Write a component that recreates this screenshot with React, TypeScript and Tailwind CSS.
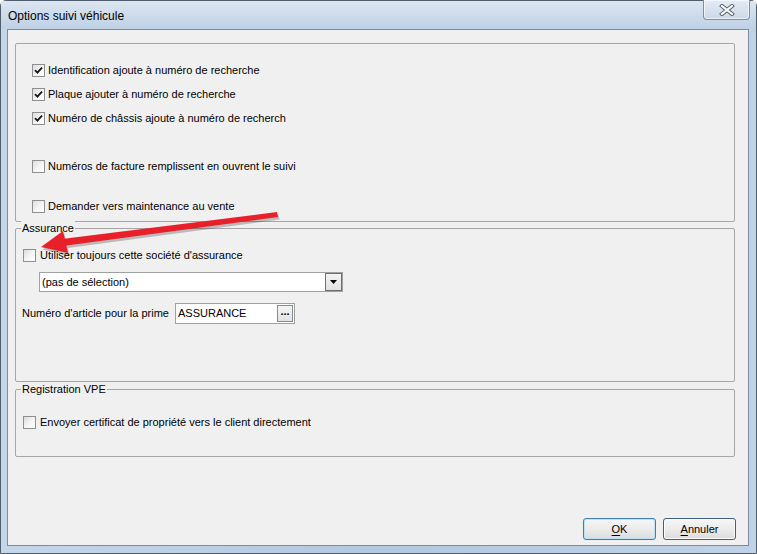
import React from "react";

function CheckBox({ checked }: { checked?: boolean }) {
  return (
    <span className="relative flex h-[13px] w-[13px] shrink-0 items-center justify-center border border-[#8e8f8f] bg-gradient-to-br from-[#dcdcdc] via-[#f4f4f4] to-white">
      {checked && (
        <svg width="9" height="9" viewBox="0 0 9 9" className="block">
          <path d="M1 4.2 L3.4 6.6 L8 1.6" fill="none" stroke="#1a1a1a" strokeWidth="1.9" />
        </svg>
      )}
    </span>
  );
}

function CheckRow({ label, checked, className = "" }: { label: string; checked?: boolean; className?: string }) {
  return (
    <div className={`flex h-[24px] items-center gap-[3px] ${className}`}>
      <CheckBox checked={checked} />
      <span>{label}</span>
    </div>
  );
}

function GroupBox({ label, className = "", children }: { label?: string; className?: string; children?: React.ReactNode }) {
  return (
    <div className={`relative ml-[7px] w-[720px] rounded-[2px] border border-[#a6a6a6] ${className}`}>
      {label && (
        <span className="absolute left-[5px] top-[-8px] bg-[#f0f0f0] px-[1px] leading-[14px]">{label}</span>
      )}
      {children}
    </div>
  );
}

function WinButton({ children, isDefault }: { children: React.ReactNode; isDefault?: boolean }) {
  return (
    <button
      type="button"
      className={`flex h-[22px] w-[73px] items-center justify-center rounded-[3px] border bg-gradient-to-b from-[#f6f6f6] via-[#ececec] to-[#dcdcdc] text-[11px] text-black ${
        isDefault ? "border-[#3c7fb1] shadow-[inset_0_0_0_1px_#bfe1f6]" : "border-[#3f5f7f] shadow-[inset_0_0_0_1px_#fcfcfc]"
      }`}
    >
      {children}
    </button>
  );
}

export default function App() {
  return (
    <div className="relative h-[554px] w-[757px] overflow-hidden bg-white font-['Liberation_Sans',Arial,sans-serif] text-[11px] text-black">
      <div className="flex h-full w-full flex-col rounded-t-[6px] border border-[#4f5d6d] bg-gradient-to-r from-[#c4d6ea] via-[#b3c9e1] to-[#bfd2e7]">
        {/* title bar */}
        <div className="relative flex h-[28px] items-center bg-gradient-to-b from-[#dce6f1] to-[#bfd1e6] pl-[7px] pt-[1px]">
          <span className="text-[12px] text-black">Options suivi véhicule</span>
          <div className="absolute right-[6px] top-[-1px] flex h-[20px] w-[47px] items-center justify-center rounded-b-[4px] border border-t-0 border-[#7f8ea0] bg-gradient-to-b from-[#e5edf5] to-[#c9d8e8] shadow-[inset_0_0_0_1px_rgba(255,255,255,0.6)]">
            <svg width="16" height="12" viewBox="0 0 16 12">
              <path d="M3 2 L13 10 M13 2 L3 10" stroke="#4f5966" strokeWidth="4" strokeLinecap="square" />
              <path d="M3 2 L13 10 M13 2 L3 10" stroke="#ffffff" strokeWidth="2.2" strokeLinecap="square" />
            </svg>
          </div>
        </div>

        {/* client area */}
        <div className="ml-[6px] mr-[7px] flex h-[517px] flex-col border border-[#7c8ca0] bg-[#f0f0f0]">
          <GroupBox className="mt-[13px] h-[179px] pl-[16px] pt-[14px]">
            <CheckRow checked label="Identification ajoute à numéro de recherche" />
            <CheckRow checked label="Plaque ajouter à numéro de recherche" />
            <CheckRow checked label="Numéro de châssis ajoute à numéro de recherch" />
            <CheckRow label="Numéros de facture remplissent en ouvrent le suivi" className="mt-[24px]" />
            <CheckRow label="Demander vers maintenance au vente" className="mt-[16px]" />
          </GroupBox>

          <GroupBox label="Assurance" className="mt-[6px] h-[154px] pl-[7px] pt-[14px]">
            <CheckRow label="Utiliser toujours cette société d'assurance" className="gap-[4px]" />
            <div className="ml-[16px] mt-[5px] flex h-[20px] w-[304px] border border-[#a0a0a0] bg-white">
              <span className="flex flex-1 items-center pl-[2px] leading-none">(pas de sélection)</span>
              <span className="flex w-[17px] items-center justify-center border border-[#6f6f6f] bg-gradient-to-b from-[#f4f4f4] to-[#e0e0e0]">
                <svg width="7" height="4" viewBox="0 0 7 4">
                  <path d="M0 0 H7 L3.5 4 Z" fill="#000" />
                </svg>
              </span>
            </div>
            <div className="ml-[-1px] mt-[11px] flex items-start">
              <span className="mt-[2px] w-[153px]">Numéro d'article pour la prime</span>
              <div className="flex h-[21px] w-[120px] border border-[#a0a0a0] bg-white">
                <span className="flex flex-1 items-center pl-[2px] leading-none">ASSURANCE</span>
                <span className="my-[1px] mr-[1px] flex w-[16px] items-center justify-center border border-[#8a8a8a] bg-gradient-to-b from-[#f6f6f6] to-[#e2e2e2] text-[11px] font-bold leading-none">
                  <span className="mt-[-4px]">...</span>
                </span>
              </div>
            </div>
          </GroupBox>

          <GroupBox label="Registration VPE" className="mt-[7px] h-[68px] pl-[7px] pt-[20px]">
            <CheckRow label="Envoyer certificat de propriété vers le client directement" className="gap-[4px]" />
          </GroupBox>

          <div className="mr-[12px] mt-[61px] flex justify-end gap-[7px]">
            <WinButton isDefault>
              <span className="underline underline-offset-[2px]">O</span>K
            </WinButton>
            <WinButton>
              <span className="underline underline-offset-[2px]">A</span>nnuler
            </WinButton>
          </div>
        </div>
      </div>

      {/* red annotation arrow */}
      <svg className="pointer-events-none absolute left-0 top-0" width="757" height="554" viewBox="0 0 757 554">
        <g transform="translate(1.5 2.5)" fill="#000" opacity="0.22">
          <polygon points="277,212 278,217 63,246 62,239" />
          <polygon points="41,247 63,231 68,253" />
        </g>
        <polygon points="277,212 278,217 63,246 62,239" fill="#e8202a" />
        <polygon points="41,247 63,231 68,253" fill="#e8202a" />
      </svg>
    </div>
  );
}
